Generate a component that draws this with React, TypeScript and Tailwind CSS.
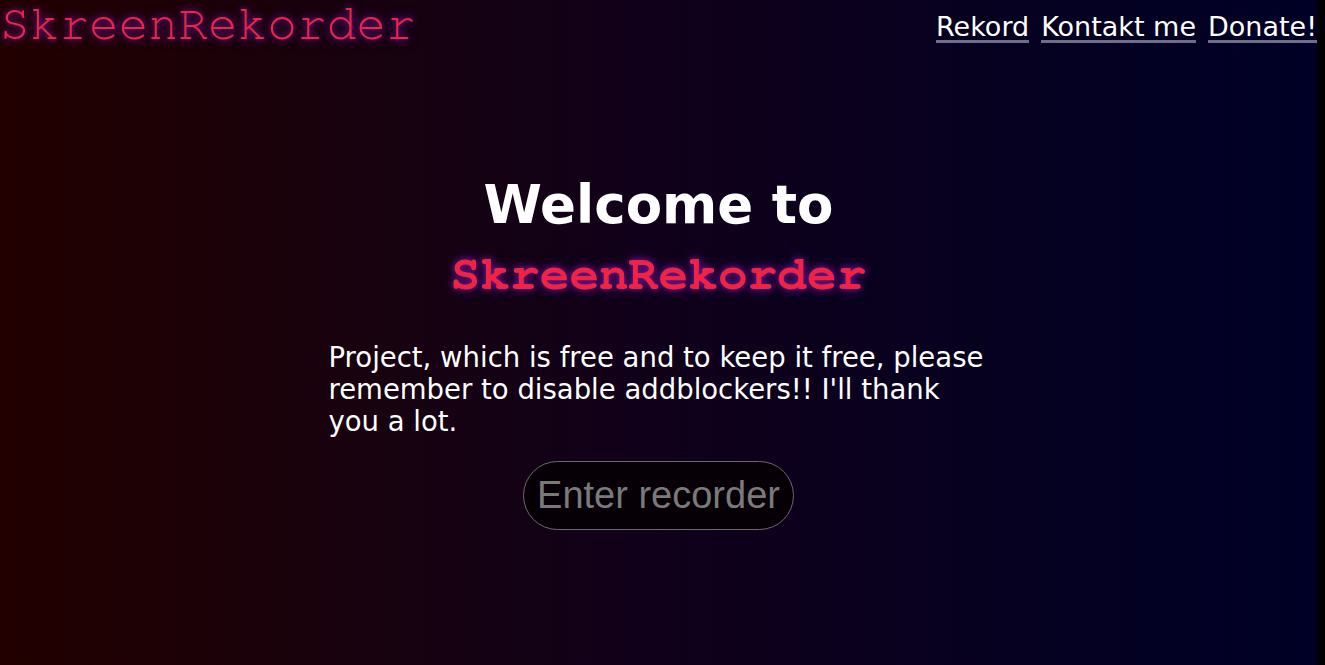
import React from "react"

const logoGlow = "[text-shadow:0_0_6px_#6c1a9c,0_0_12px_#4c0f70]"

function Logo({ big }: { big?: boolean }) {
  return (
    <span
      className={`font-['Nimbus_Mono_PS','FreeMono','Courier','Liberation_Mono',monospace] text-[49.5px] leading-none text-[#f22342] ${logoGlow} ${
        big ? "font-bold" : "font-normal"
      }`}
    >
      SkreenRekorder
    </span>
  )
}

export default function App() {
  const links = ["Rekord", "Kontakt me", "Donate!"]

  return (
    <div className="flex h-[665px] w-full overflow-hidden bg-black font-['DejaVu_Sans','Verdana',sans-serif]">
      <div className="flex flex-1 flex-col bg-gradient-to-r from-[#220000] via-[#10001a] to-[#000026]">
        <header className="flex items-start justify-between">
          <div className="pl-0 pt-0">
            <Logo />
          </div>
          <nav className="flex gap-[12px] pt-[13px]">
            {links.map((l) => (
              <a
                key={l}
                href="#"
                className="border-b-[3px] border-[#6e6e88] text-[27px] leading-[27px] text-white"
              >
                {l}
              </a>
            ))}
          </nav>
        </header>

        <main className="flex flex-col items-center pt-[124px]">
          <h1 className="text-[53px] font-bold leading-[62px] text-white">Welcome to</h1>
          <div className="mt-[14px]">
            <Logo big />
          </div>
          <p className="mt-[42px] w-[660px] text-[27.5px] leading-[32px] text-white">
            Project, which is free and to keep it free, please remember to disable addblockers!! I'll thank you a
            lot.
          </p>
          <button className="mt-[24px] rounded-full border border-[#6a6a6a] bg-[#060006] px-[13px] py-[11px] font-['Liberation_Sans','Arial',sans-serif] text-[38px] leading-[45px] text-[#7a7a7a]">
            Enter recorder
          </button>
        </main>
      </div>
      <div className="w-[8px] bg-black" />
    </div>
  )
}
